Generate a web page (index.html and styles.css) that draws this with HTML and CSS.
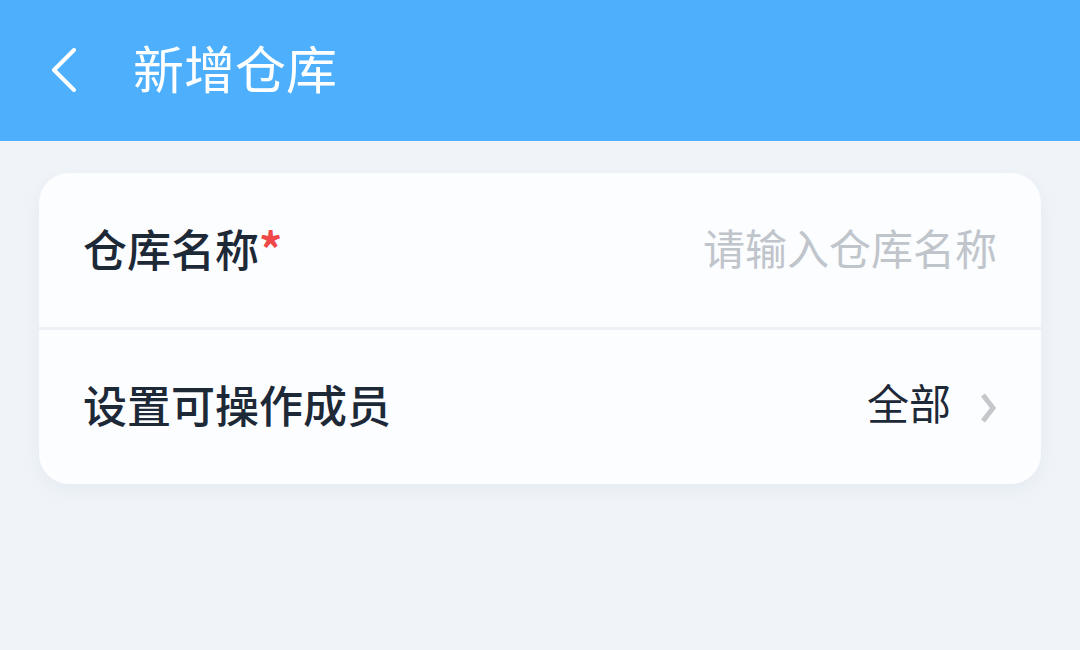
FILE: index.html
```html
<!DOCTYPE html>
<html lang="zh-CN">
<head>
<meta charset="utf-8">
<link rel="stylesheet" href="styles.css">
</head>
<body>
<header class="nav">
  <span class="back">
    <svg width="30" height="44" viewBox="0 0 30 44"><polyline points="26,2 6,22 26,42" fill="none" stroke="#fff" stroke-width="4" stroke-linecap="round" stroke-linejoin="round"/></svg>
  </span>
  <h1 class="title">新增仓库</h1>
</header>
<main class="content">
  <section class="card">
    <div class="row">
      <div class="label">仓库名称<span class="req">*</span></div>
      <div class="placeholder">请输入仓库名称</div>
    </div>
    <div class="row">
      <div class="label">设置可操作成员</div>
      <div class="value">全部
        <svg class="chev" width="18" height="32" viewBox="0 0 18 32"><polyline points="4,3 14,16 4,29" fill="none" stroke="#c5c7cb" stroke-width="5" stroke-linejoin="miter"/></svg>
      </div>
    </div>
  </section>
</main>
</body>
</html>
```
FILE: styles.css
```css
* { box-sizing: border-box; }
html, body { margin: 0; padding: 0; }
body {
  width: 1080px;
  height: 650px;
  background: #f0f4f8;
  font-family: "Noto Sans CJK SC", "Noto Sans", sans-serif;
  overflow: hidden;
}
.nav {
  height: 141px;
  background: #4eb0fd;
  display: flex;
  align-items: center;
  padding-left: 48px;
}
.back { display: flex; width: 30px; height: 44px; margin-top: -2px; }
.title {
  margin: 0 0 0 55px;
  font-size: 51px;
  font-weight: 400;
  color: #fff;
  line-height: 1;
  margin-top: -6px;
}
.content { padding: 32px 39px 0; }
.card {
  background: #fbfdff;
  border-radius: 30px;
  box-shadow: 0 6px 18px rgba(150, 170, 200, 0.12);
  overflow: hidden;
}
.row {
  display: flex;
  align-items: center;
  justify-content: space-between;
  padding: 0 44px 0 44px;
}
.row:first-child { height: 154px; }
.row + .row { border-top: 3px solid #edf0f4; height: 157px; }
.label {
  font-size: 44px;
  font-weight: 500;
  color: #1e2938;
  line-height: 1;
  margin-top: -6px;
}
.req { color: #f04848; font-size: 46px; font-weight: 700; }
.placeholder {
  font-size: 42px;
  color: #c0c4cb;
  line-height: 1;
  margin-top: -6px;
}
.value {
  display: flex;
  align-items: center;
  font-size: 42px;
  color: #1e2938;
  line-height: 1;
  margin-top: -10px;
  margin-right: 0;
}
.chev { margin-left: 28px; margin-top: 12px; }
```
